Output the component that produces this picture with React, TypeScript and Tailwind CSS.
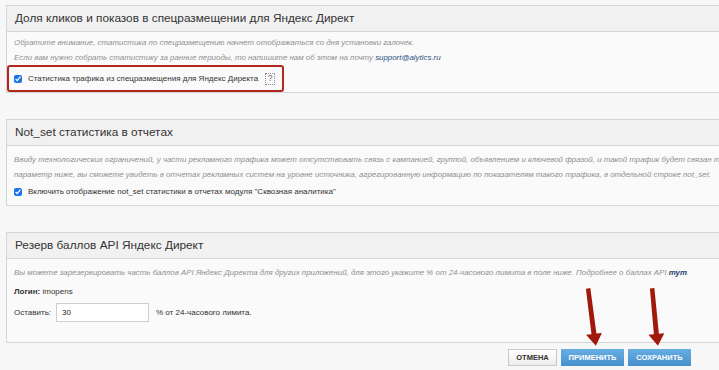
import { useState } from 'react'

function Panel({ title, children }: { title: string; children: React.ReactNode }) {
  return (
    <div className="w-[760px] border border-[#d5d5d5] bg-[#fafafa]">
      <div className="h-[26px] flex items-center px-[8px] bg-[#f1f1f1] border-b border-[#d5d5d5] text-[11.8px] text-[#333]">
        {title}
      </div>
      {children}
    </div>
  )
}

function Hint({ children }: { children: React.ReactNode }) {
  return <div className="italic text-[7.9px] leading-[15px] text-[#8f8f8f] whitespace-nowrap">{children}</div>
}

function Check({ label, checked, onChange }: { label: string; checked: boolean; onChange: () => void }) {
  return (
    <label className="flex items-center gap-[6px] text-[8px] leading-[12px] text-[#333] whitespace-nowrap">
      <input
        type="checkbox"
        checked={checked}
        onChange={onChange}
        className="w-[8px] h-[8px] m-0 accent-[#1a73e8]"
      />
      {label}
    </label>
  )
}

function Arrow() {
  return (
    <svg width="20" height="60" viewBox="0 0 20 60" className="block">
      <path d="M7.5 0 L12 0 L12.5 46 L18 46 L10.5 58 L2 46 L7.5 46 Z" fill="#a1190c" />
    </svg>
  )
}

export default function App() {
  const [traffic, setTraffic] = useState(true)
  const [notSet, setNotSet] = useState(true)
  const [reserve, setReserve] = useState('30')

  return (
    <div className="relative w-[719px] h-[370px] overflow-hidden bg-[#f7f7f7] font-['Liberation_Sans',Arial,sans-serif]">
      <div className="flex flex-col gap-[26px] pl-[6px] pt-[5px]">
        <Panel title="Доля кликов и показов в спецразмещении для Яндекс Директ">
          <div className="px-[7px] pt-[3px]">
            <Hint>Обратите внимание, статистика по спецразмещению начнет отображаться со дня установки галочек.</Hint>
            <Hint>
              Если вам нужно собрать статистику за ранние периоды, то напишите нам об этом на почту{' '}
              <a className="text-[#2c4f80]">support@alytics.ru</a>
            </Hint>
          </div>
          <div className="w-[277px] h-[27px] flex items-center pl-[5px] border-2 border-[#b3281c] rounded-[3px]">
            <Check label="Статистика трафика из спецразмещения для Яндекс Директа" checked={traffic} onChange={() => setTraffic(!traffic)} />
            <span className="ml-[7px] w-[10px] h-[12px] border border-dotted border-[#8f8f8f] flex items-center justify-center text-[8.5px] text-[#666]">
              ?
            </span>
          </div>
        </Panel>

        <Panel title="Not_set статистика в отчетах">
          <div className="px-[7px] pt-[6px] pb-[7px]">
            <Hint>
              Ввиду технологических ограничений, у части рекламного трафика может отсутствовать связь с кампанией, группой, объявлением и ключевой фразой, и такой трафик будет связан только с рекламной системой. Включив
            </Hint>
            <Hint>
              параметр ниже, вы сможете увидеть в отчетах рекламных систем на уровне источника, агрегированную информацию по показателям такого трафика, в отдельной строке not_set.
            </Hint>
            <div className="mt-[4px]">
              <Check label={'Включить отображение not_set статистики в отчетах модуля "Сквозная аналитика"'} checked={notSet} onChange={() => setNotSet(!notSet)} />
            </div>
          </div>
        </Panel>

        <Panel title="Резерв баллов API Яндекс Директ">
          <div className="px-[7px] pt-[6px] pb-[20px]">
            <Hint>
              Вы можете зарезервировать часть баллов API Яндекс Директа для других приложений, для этого укажите % от 24-часового лимита в поле ниже. Подробнее о баллах API{' '}
              <a className="font-bold text-[#1f3d6b]">тут</a>.
            </Hint>
            <div className="mt-[6px] text-[8px] leading-[12px] text-[#333]">
              <b>Логин:</b> imopens
            </div>
            <div className="mt-[5px] flex items-center text-[8px] text-[#333]">
              <span className="w-[42px]">Оставить:</span>
              <input
                value={reserve}
                onChange={(e) => setReserve(e.target.value)}
                className="w-[93px] h-[19px] px-[5px] border border-[#cfcfcf] bg-white text-[8px] text-[#222] outline-none"
              />
              <span className="ml-[7px]">% от 24-часового лимита.</span>
            </div>
          </div>
        </Panel>
      </div>

      <div className="flex justify-end gap-[4px] pr-[28px] mt-[6px]">
        <button className="w-[49px] h-[17px] border border-[#c8c8c8] bg-gradient-to-b from-white to-[#ececec] text-[7.5px] font-bold text-[#333]">
          ОТМЕНА
        </button>
        <button className="w-[63px] h-[17px] bg-gradient-to-b from-[#67aee2] to-[#4590cd] text-[7.5px] font-bold text-white">
          ПРИМЕНИТЬ
        </button>
        <button className="w-[63px] h-[17px] bg-gradient-to-b from-[#67aee2] to-[#4590cd] text-[7.5px] font-bold text-white">
          СОХРАНИТЬ
        </button>
      </div>

      {/* annotation arrows */}
      <div className="absolute left-[582px] top-[288px] -rotate-[7deg]">
        <Arrow />
      </div>
      <div className="absolute left-[645px] top-[288px] -rotate-[5deg]">
        <Arrow />
      </div>
    </div>
  )
}
